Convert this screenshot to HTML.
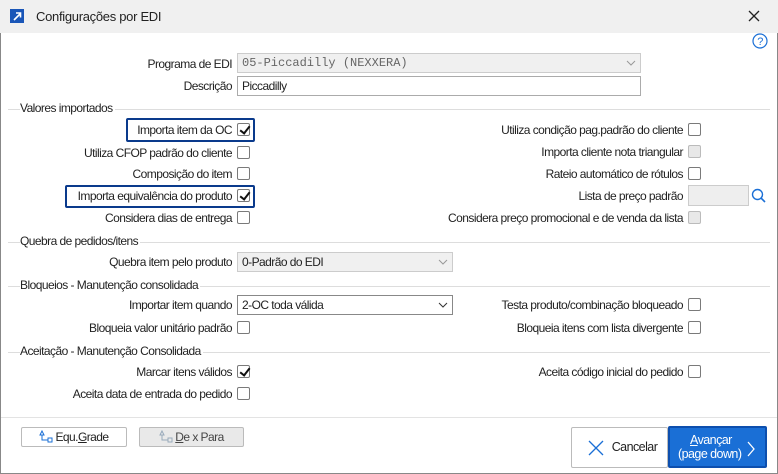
<!DOCTYPE html>
<html><head><meta charset="utf-8"><style>
*{box-sizing:border-box;margin:0;padding:0}
body{width:778px;height:474px;overflow:hidden;background:#fff;font-family:"Liberation Sans",sans-serif;font-size:12px;color:#222;position:relative;letter-spacing:-0.55px}
.win{position:absolute;left:0;top:0;width:778px;height:474px;border:1px solid #888;}
.title{position:absolute;left:0;top:0;width:778px;height:33px;background:#f0f0f0;}
.a{position:absolute;white-space:nowrap}
.l{position:absolute;white-space:nowrap;text-align:right;width:300px;line-height:14px}
.cb{position:absolute;width:13px;height:13px;border:1px solid #7a7a7a;border-radius:2px;background:#fff}
.cb.d{background:#e8e8e8;border-color:#bbb}
.cb.c::after{content:"";position:absolute;left:3.5px;top:0px;width:4px;height:8px;border:solid #111;border-width:0 2px 2px 0;transform:rotate(38deg)}
.sec{position:absolute;left:8px;width:762px;height:1px;background:#ddd}
.st{position:absolute;left:20px;background:#fff;padding-right:2px;line-height:14px}
.box{position:absolute;border:1px solid #ababab;background:#fff;padding-left:4px;line-height:18px}
.hl{position:absolute;border:2.5px solid #0a3a8c;border-radius:2px}
.btn{position:absolute;border:1px solid #bbb;background:#fff;border-radius:2px;text-align:center;line-height:18px}
</style></head><body>
<div class="win"></div>
<div class="title"></div>
<div class="a" style="left:10px;top:9px;width:14px;height:14px;background:#1a56b8"></div>
<svg class="a" style="left:10px;top:9px" width="14" height="14"><path d="M4 11 L10 5 M6 4 H10.5 V8.5" stroke="#fff" stroke-width="1.6" fill="none"/></svg>
<div class="a" style="left:36px;top:9px;font-size:13px;letter-spacing:-0.3px">Configurações por EDI</div>
<svg class="a" style="left:748px;top:10px" width="12" height="12"><path d="M1 1L11 11M11 1L1 11" stroke="#222" stroke-width="1.3"/></svg>
<svg class="a" style="left:752px;top:33px" width="16" height="16"><circle cx="8" cy="8" r="7" fill="none" stroke="#1a6fd6" stroke-width="1.2"/><text x="8" y="12" font-size="11" text-anchor="middle" fill="#1a6fd6" font-family="Liberation Sans">?</text></svg>

<div class="l" style="left:-68px;top:57px">Programa de EDI</div>
<div class="box" style="left:237px;top:53px;width:404px;height:20px;background:#f0f0f0;border-color:#ccc;font-family:'Liberation Mono',monospace;color:#666;letter-spacing:0">05-Piccadilly (NEXXERA)</div>
<svg class="a" style="left:626px;top:59px" width="10" height="8"><path d="M1 2L5 6L9 2" stroke="#999" fill="none"/></svg>
<div class="l" style="left:-68px;top:79px">Descrição</div>
<div class="box" style="left:237px;top:76px;width:404px;height:20px">Piccadilly</div>

<div class="sec" style="top:109px"></div><div class="st" style="top:101px">Valores importados</div>
<div class="hl" style="left:126px;top:118px;width:129px;height:24px"></div>
<div class="hl" style="left:65px;top:185px;width:190px;height:23px"></div>
<div class="l" style="left:-68px;top:123px">Importa item da OC</div><div class="cb c" style="left:237px;top:123px"></div>
<div class="l" style="left:-68px;top:146px">Utiliza CFOP padrão do cliente</div><div class="cb" style="left:237px;top:146px"></div>
<div class="l" style="left:-68px;top:167px">Composição do item</div><div class="cb" style="left:237px;top:167px"></div>
<div class="l" style="left:-68px;top:189px">Importa equivalência do produto</div><div class="cb c" style="left:237px;top:189px"></div>
<div class="l" style="left:-68px;top:211px">Considera dias de entrega</div><div class="cb" style="left:237px;top:211px"></div>

<div class="l" style="left:383px;top:123px">Utiliza condição pag.padrão do cliente</div><div class="cb" style="left:688px;top:123px"></div>
<div class="l" style="left:383px;top:145px">Importa cliente nota triangular</div><div class="cb d" style="left:688px;top:145px"></div>
<div class="l" style="left:383px;top:167px">Rateio automático de rótulos</div><div class="cb" style="left:688px;top:167px"></div>
<div class="l" style="left:383px;top:189px">Lista de preço padrão</div><div class="box" style="left:688px;top:185px;width:61px;height:21px;background:#eee;border-color:#ccc"></div>
<svg class="a" style="left:751px;top:188px" width="16" height="16"><circle cx="6.5" cy="6.5" r="5" fill="none" stroke="#1a6fd6" stroke-width="1.4"/><path d="M10 10L14 14" stroke="#1a6fd6" stroke-width="1.6"/></svg>
<div class="l" style="left:383px;top:211px">Considera preço promocional e de venda da lista</div><div class="cb d" style="left:688px;top:211px"></div>

<div class="sec" style="top:242px"></div><div class="st" style="top:234px">Quebra de pedidos/itens</div>
<div class="l" style="left:-68px;top:255px">Quebra item pelo produto</div>
<div class="box" style="left:237px;top:252px;width:216px;height:20px;background:#f0f0f0;border-color:#ccc">0-Padrão do EDI</div>
<svg class="a" style="left:438px;top:258px" width="10" height="8"><path d="M1 2L5 6L9 2" stroke="#999" fill="none"/></svg>

<div class="sec" style="top:286px"></div><div class="st" style="top:278px">Bloqueios - Manutenção consolidada</div>
<div class="l" style="left:-68px;top:298px">Importar item quando</div>
<div class="box" style="left:237px;top:295px;width:216px;height:20px;border-color:#888">2-OC toda válida</div>
<svg class="a" style="left:438px;top:301px" width="10" height="8"><path d="M1 2L5 6L9 2" stroke="#333" fill="none"/></svg>
<div class="l" style="left:383px;top:298px">Testa produto/combinação bloqueado</div><div class="cb" style="left:688px;top:298px"></div>
<div class="l" style="left:-68px;top:321px">Bloqueia valor unitário padrão</div><div class="cb" style="left:237px;top:321px"></div>
<div class="l" style="left:383px;top:321px">Bloqueia itens com lista divergente</div><div class="cb" style="left:688px;top:321px"></div>

<div class="sec" style="top:352px"></div><div class="st" style="top:344px">Aceitação - Manutenção Consolidada</div>
<div class="l" style="left:-68px;top:365px">Marcar itens válidos</div><div class="cb c" style="left:237px;top:365px"></div>
<div class="l" style="left:383px;top:365px">Aceita código inicial do pedido</div><div class="cb" style="left:688px;top:365px"></div>
<div class="l" style="left:-68px;top:387px">Aceita data de entrada do pedido</div><div class="cb" style="left:237px;top:387px"></div>

<div class="a" style="left:1px;top:417px;width:776px;height:1px;background:#e3e3e3"></div>
<div class="btn" style="left:21px;top:427px;width:106px;height:20px"><svg style="vertical-align:-3px;margin-right:2px" width="14" height="14"><path d="M3 1L1 5H5Z M3 5V10H9" stroke="#1a6fd6" fill="none"/><rect x="9" y="8" width="4" height="4" fill="none" stroke="#1a6fd6"/></svg>Equ.<u>G</u>rade</div>
<div class="btn" style="left:139px;top:427px;width:105px;height:20px;background:#e9e9e9;color:#444"><svg style="vertical-align:-3px;margin-right:2px" width="14" height="14"><path d="M3 1L1 5H5Z M3 5V10H9" stroke="#9ab" fill="none"/><rect x="9" y="8" width="4" height="4" fill="none" stroke="#9ab"/></svg><u>D</u>e x Para</div>
<div class="btn" style="left:571px;top:427px;width:97px;height:41px;line-height:39px;font-size:12.5px"><svg style="position:absolute;left:15px;top:11px" width="18" height="18"><path d="M2 2L16 16M16 2L2 16" stroke="#1a6fd6" stroke-width="1.3"/></svg><span style="margin-left:30px">Cancelar</span></div>
<div class="btn" style="left:668px;top:426px;width:99px;height:42px;background:#1a6fd6;border:2px solid #0d4fae;color:#fff;line-height:14px;padding-top:5px;text-align:left;padding-left:8px;font-size:12.5px"><div style="padding-left:12px"><u>A</u>vançar</div><div>(page down)</div><svg style="position:absolute;left:76px;top:13px" width="10" height="16"><path d="M2 1L8 8L2 15" stroke="#fff" stroke-width="1.3" fill="none"/></svg></div>
</body></html>
